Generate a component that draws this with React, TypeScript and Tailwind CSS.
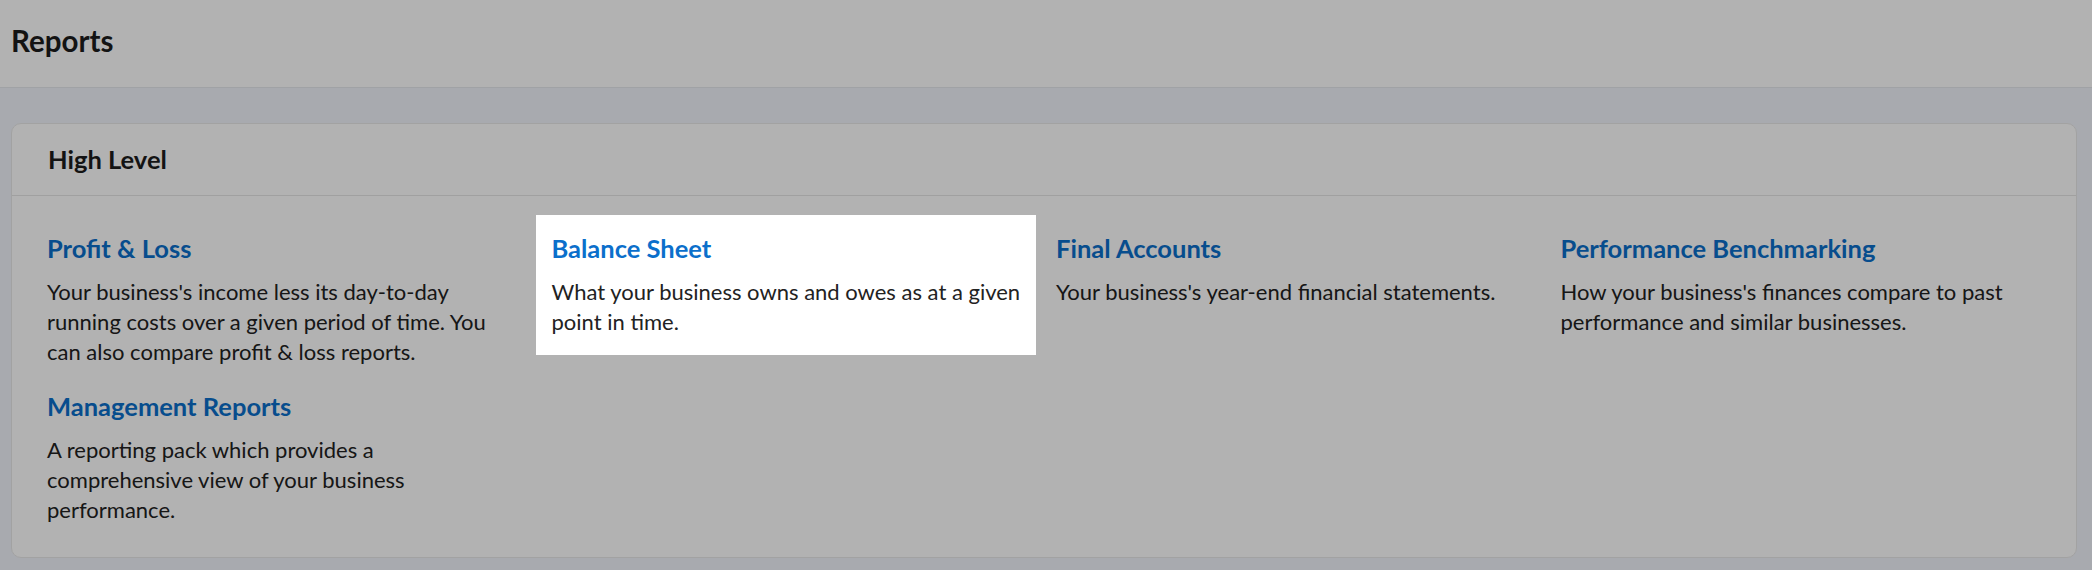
import type { ReactNode } from "react";

type Report = {
  title: string;
  lines: string[];
  spotlight?: boolean;
};

// one array per grid column; lines are kept as the reference wraps them
const COLUMNS: Report[][] = [
  [
    {
      title: "Profit & Loss",
      lines: [
        "Your business's income less its day-to-day",
        "running costs over a given period of time. You",
        "can also compare profit & loss reports.",
      ],
    },
    {
      title: "Management Reports",
      lines: ["A reporting pack which provides a", "comprehensive view of your business", "performance."],
    },
  ],
  [
    {
      title: "Balance Sheet",
      lines: ["What your business owns and owes as at a given", "point in time."],
      spotlight: true,
    },
  ],
  [
    {
      title: "Final Accounts",
      lines: ["Your business's year-end financial statements."],
    },
  ],
  [
    {
      title: "Performance Benchmarking",
      lines: ["How your business's finances compare to past", "performance and similar businesses."],
    },
  ],
];

function ReportItem({ report }: { report: Report }) {
  const body: ReactNode[] = [];
  report.lines.forEach((l, i) => {
    if (i > 0) body.push(<br key={`br-${i}`} />);
    body.push(<span key={i}>{l}</span>);
  });

  return (
    <div
      className={
        report.spotlight
          ? "relative z-20 bg-white pb-[2px] shadow-[0_0_0_16px_#ffffff]"
          : "relative"
      }
    >
      <a
        href="#"
        className="block whitespace-nowrap text-[25.5px] leading-[34px] font-bold text-[#0b6fcb]"
      >
        {report.title}
      </a>
      <p className="mt-3 whitespace-nowrap text-[22px] leading-[30px] text-[#222222]">{body}</p>
    </div>
  );
}

export default function App() {
  return (
    <div className="relative min-h-screen bg-[#f1f4fb] font-['Lato','Noto_Sans',sans-serif] text-[#222222]">
      <header className="flex h-[88px] items-center border-b border-[#e6e8ed] bg-white pb-1 pl-[11px]">
        <h1 className="text-[29.5px] font-bold text-[#1c1c1c]">Reports</h1>
      </header>

      <main className="pl-[11px] pr-[15px] pt-[35px]">
        <section className="rounded-[10px] border border-[#e9e9e9] bg-white">
          <div className="flex h-[72px] items-center border-b border-[#e6e6e6] px-9">
            <h2 className="text-[25.5px] font-bold text-[#1c1c1c]">High Level</h2>
          </div>
          <div className="grid grid-cols-[repeat(4,468px)] gap-x-[36.5px] pb-8 pl-[35px] pt-[35px]">
            {COLUMNS.map((col, ci) => (
              <div key={ci} className="flex flex-col gap-[22px]">
                {col.map((r) => (
                  <ReportItem key={r.title} report={r} />
                ))}
              </div>
            ))}
          </div>
        </section>
      </main>

      {/* tour backdrop: everything but the spotlighted item is dimmed */}
      <div className="pointer-events-none absolute inset-0 z-10 bg-black/30" />
    </div>
  );
}
